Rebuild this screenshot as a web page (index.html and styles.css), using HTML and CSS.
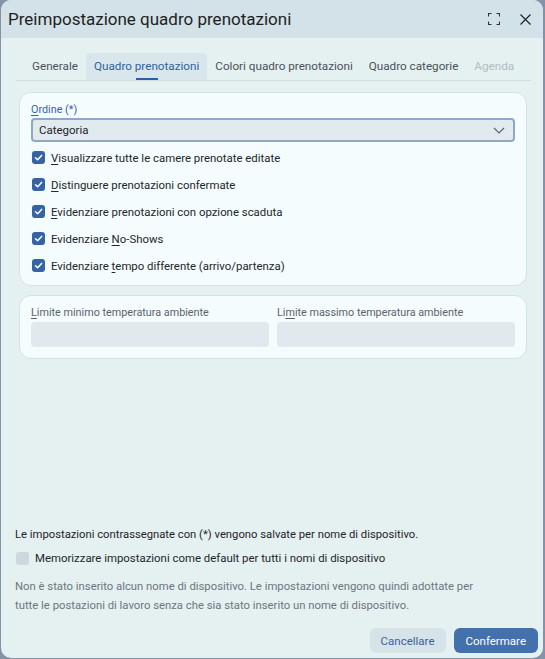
FILE: index.html
```html
<!DOCTYPE html>
<html lang="it">
<head>
  <meta charset="UTF-8">
  <title>Preimpostazione quadro prenotazioni</title>
  <link rel="stylesheet" href="styles.css">
</head>
<body>

  <div class="dialog">

    <!-- barra titolo -->
    <div class="titlebar">
      <span class="title">Preimpostazione quadro prenotazioni</span>
      <div class="title-icons">
        <svg width="12" height="12" viewBox="0 0 12 12" fill="none" stroke="#333" stroke-width="1.1">
          <path d="M0.5 3.5V0.5H3.5M8.5 0.5H11.5V3.5M11.5 8.5V11.5H8.5M3.5 11.5H0.5V8.5"/>
        </svg>
        <svg width="11" height="11" viewBox="0 0 11 11" fill="none" stroke="#222" stroke-width="1.2">
          <path d="M0.5 0.5L10.5 10.5M10.5 0.5L0.5 10.5"/>
        </svg>
      </div>
    </div>

    <div class="content">
      <div class="tabs">
        <div class="tab">Generale</div>
        <div class="tab active">Quadro prenotazioni</div>
        <div class="tab">Colori quadro prenotazioni</div>
        <div class="tab">Quadro categorie</div>
        <div class="tab disabled">Agenda</div>
      </div>

      <div class="card">
        <div class="field-label blue"><u>O</u>rdine (*)</div>
        <div class="select">
          <span>Categoria</span>
          <svg width="12" height="7" viewBox="0 0 12 7" fill="none" stroke="#5a6675" stroke-width="1.2">
            <path d="M1 1L6 6L11 1"/>
          </svg>
        </div>
        <div class="check-row"><span class="check on"></span><span><u>V</u>isualizzare tutte le camere prenotate editate</span></div>
        <div class="check-row"><span class="check on"></span><span><u>D</u>istinguere prenotazioni confermate</span></div>
        <div class="check-row"><span class="check on"></span><span><u>E</u>videnziare prenotazioni con opzione scaduta</span></div>
        <div class="check-row"><span class="check on"></span><span>Evidenziare <u>N</u>o-Shows</span></div>
        <div class="check-row"><span class="check on"></span><span>Evidenziare <u>t</u>empo differente (arrivo/partenza)</span></div>
      </div>

      <div class="card card-temp">
        <div class="temp-field">
          <div class="field-label"><u>L</u>imite minimo temperatura ambiente</div>
          <div class="input"></div>
        </div>
        <div class="temp-field">
          <div class="field-label">Li<u>m</u>ite massimo temperatura ambiente</div>
          <div class="input"></div>
        </div>
      </div>
    </div>

    <div class="footer">
      <p class="note">Le impostazioni contrassegnate con (*) vengono salvate per nome di dispositivo.</p>
      <div class="check-row footer-check"><span class="check"></span><span>Memorizzare impostazioni come default per tutti i nomi di dispositivo</span></div>
      <p class="hint">Non è stato inserito alcun nome di dispositivo. Le impostazioni vengono quindi adottate per tutte le postazioni di lavoro senza che sia stato inserito un nome di dispositivo.</p>
      <div class="buttons">
        <button class="btn btn-secondary">Cancellare</button>
        <button class="btn btn-primary">Confermare</button>
      </div>
    </div>

  </div>

</body>
</html>
```

FILE: styles.css
```css
body {
  margin: 0;
  padding: 0 0 0 1px;
  background: #8392a7;
  font-family: Roboto, "Noto Sans", sans-serif;
  color: #1f2429;
}

u { text-decoration-thickness: 1px; text-underline-offset: 2px; }

.dialog {
  width: 542px;
  height: 658px;
  background: #e5f0f1;
  border-radius: 10px;
  overflow: hidden;
  display: flex;
  flex-direction: column;
}

.titlebar {
  height: 38px;
  flex-shrink: 0;
  background: #d3e1e8;
  display: flex;
  align-items: center;
  justify-content: space-between;
  padding: 0 12px 0 7px;
}
.title { font-size: 17px; color: #1c1f23; }
.title-icons { display: flex; align-items: center; gap: 20px; }

.content { flex: 1; padding: 15px 15px 0 15px; }

.tabs {
  display: flex;
  margin-right: -3px;
  padding-left: 8px;
  border-bottom: 1px solid #cfdde3;
}
.tab {
  font-size: 11.7px;
  color: #4a5259;
  padding: 0 8px;
  height: 27px;
  line-height: 27px;
  white-space: nowrap;
  position: relative;
}
.tab.active {
  background: #d9e7ec;
  color: #2f5f9e;
  border-radius: 4px 4px 0 0;
}
.tab.active::after {
  content: "";
  position: absolute;
  left: 50px;
  width: 22px;
  bottom: 0;
  height: 2px;
  background: #2d5fa6;
}
.tab.disabled { color: #b3bcc2; }

.card {
  margin: 11px 1px 0 3px;
  background: #f4fcfd;
  border: 1px solid #d4e1e5;
  border-radius: 12px;
  padding: 10px 11px 6px 11px;
}

.field-label { font-size: 10.8px; color: #5b636b; line-height: 14px; }
.field-label.blue { color: #3762a7; }

.select {
  margin-top: 1px;
  height: 20px;
  border: 2px solid #8fa8c8;
  border-radius: 4px;
  background: #e0eaef;
  display: flex;
  align-items: center;
  justify-content: space-between;
  padding: 0 8px 0 6px;
  font-size: 11.5px;
}

.check-row {
  display: flex;
  align-items: center;
  gap: 6px;
  height: 27px;
  font-size: 11.4px;
  color: #22272c;
}
.select + .check-row { margin-top: 2px; }

.check {
  width: 13px;
  height: 13px;
  border-radius: 3px;
  background: #cdd8de;
  flex-shrink: 0;
  margin-left: 1px;
}
.check.on {
  background: #3564a6 url("data:image/svg+xml;utf8,<svg xmlns='http://www.w3.org/2000/svg' width='13' height='13' viewBox='0 0 13 13'><path d='M3.5 6.8L5.6 8.8L9.6 4.4' fill='none' stroke='white' stroke-width='1.5' stroke-linecap='round' stroke-linejoin='round'/></svg>") no-repeat center;
}

.card-temp {
  display: flex;
  gap: 8px;
  margin-top: 9px;
  padding: 10px 11px 11px 11px;
}
.temp-field { flex: 1; }
.input {
  margin-top: 2px;
  height: 25px;
  background: #dfe9ee;
  border-radius: 4px;
}

.footer { padding: 0 5px 5px 14px; }

.note { margin: 0; font-size: 11.25px; line-height: 16px; color: #1f2429; }

.footer-check { height: 24px; margin-top: 3px; gap: 6px; }
.footer-check .check { margin-left: 1px; }

.hint {
  margin: 7px 0 0 0;
  font-size: 11.3px;
  line-height: 19px;
  color: #6d757d;
  width: 475px;
}

.buttons {
  display: flex;
  justify-content: flex-end;
  gap: 8px;
  margin-top: 13px;
}
.btn {
  font-family: inherit;
  font-size: 11.5px;
  height: 25px;
  border: none;
  border-radius: 6px;
  padding: 0 12px;
  cursor: pointer;
}
.btn-secondary { background: #d6e4ea; color: #3a62a0; padding: 0 11px; }
.btn-primary { background: #4470ad; color: white; }
```
